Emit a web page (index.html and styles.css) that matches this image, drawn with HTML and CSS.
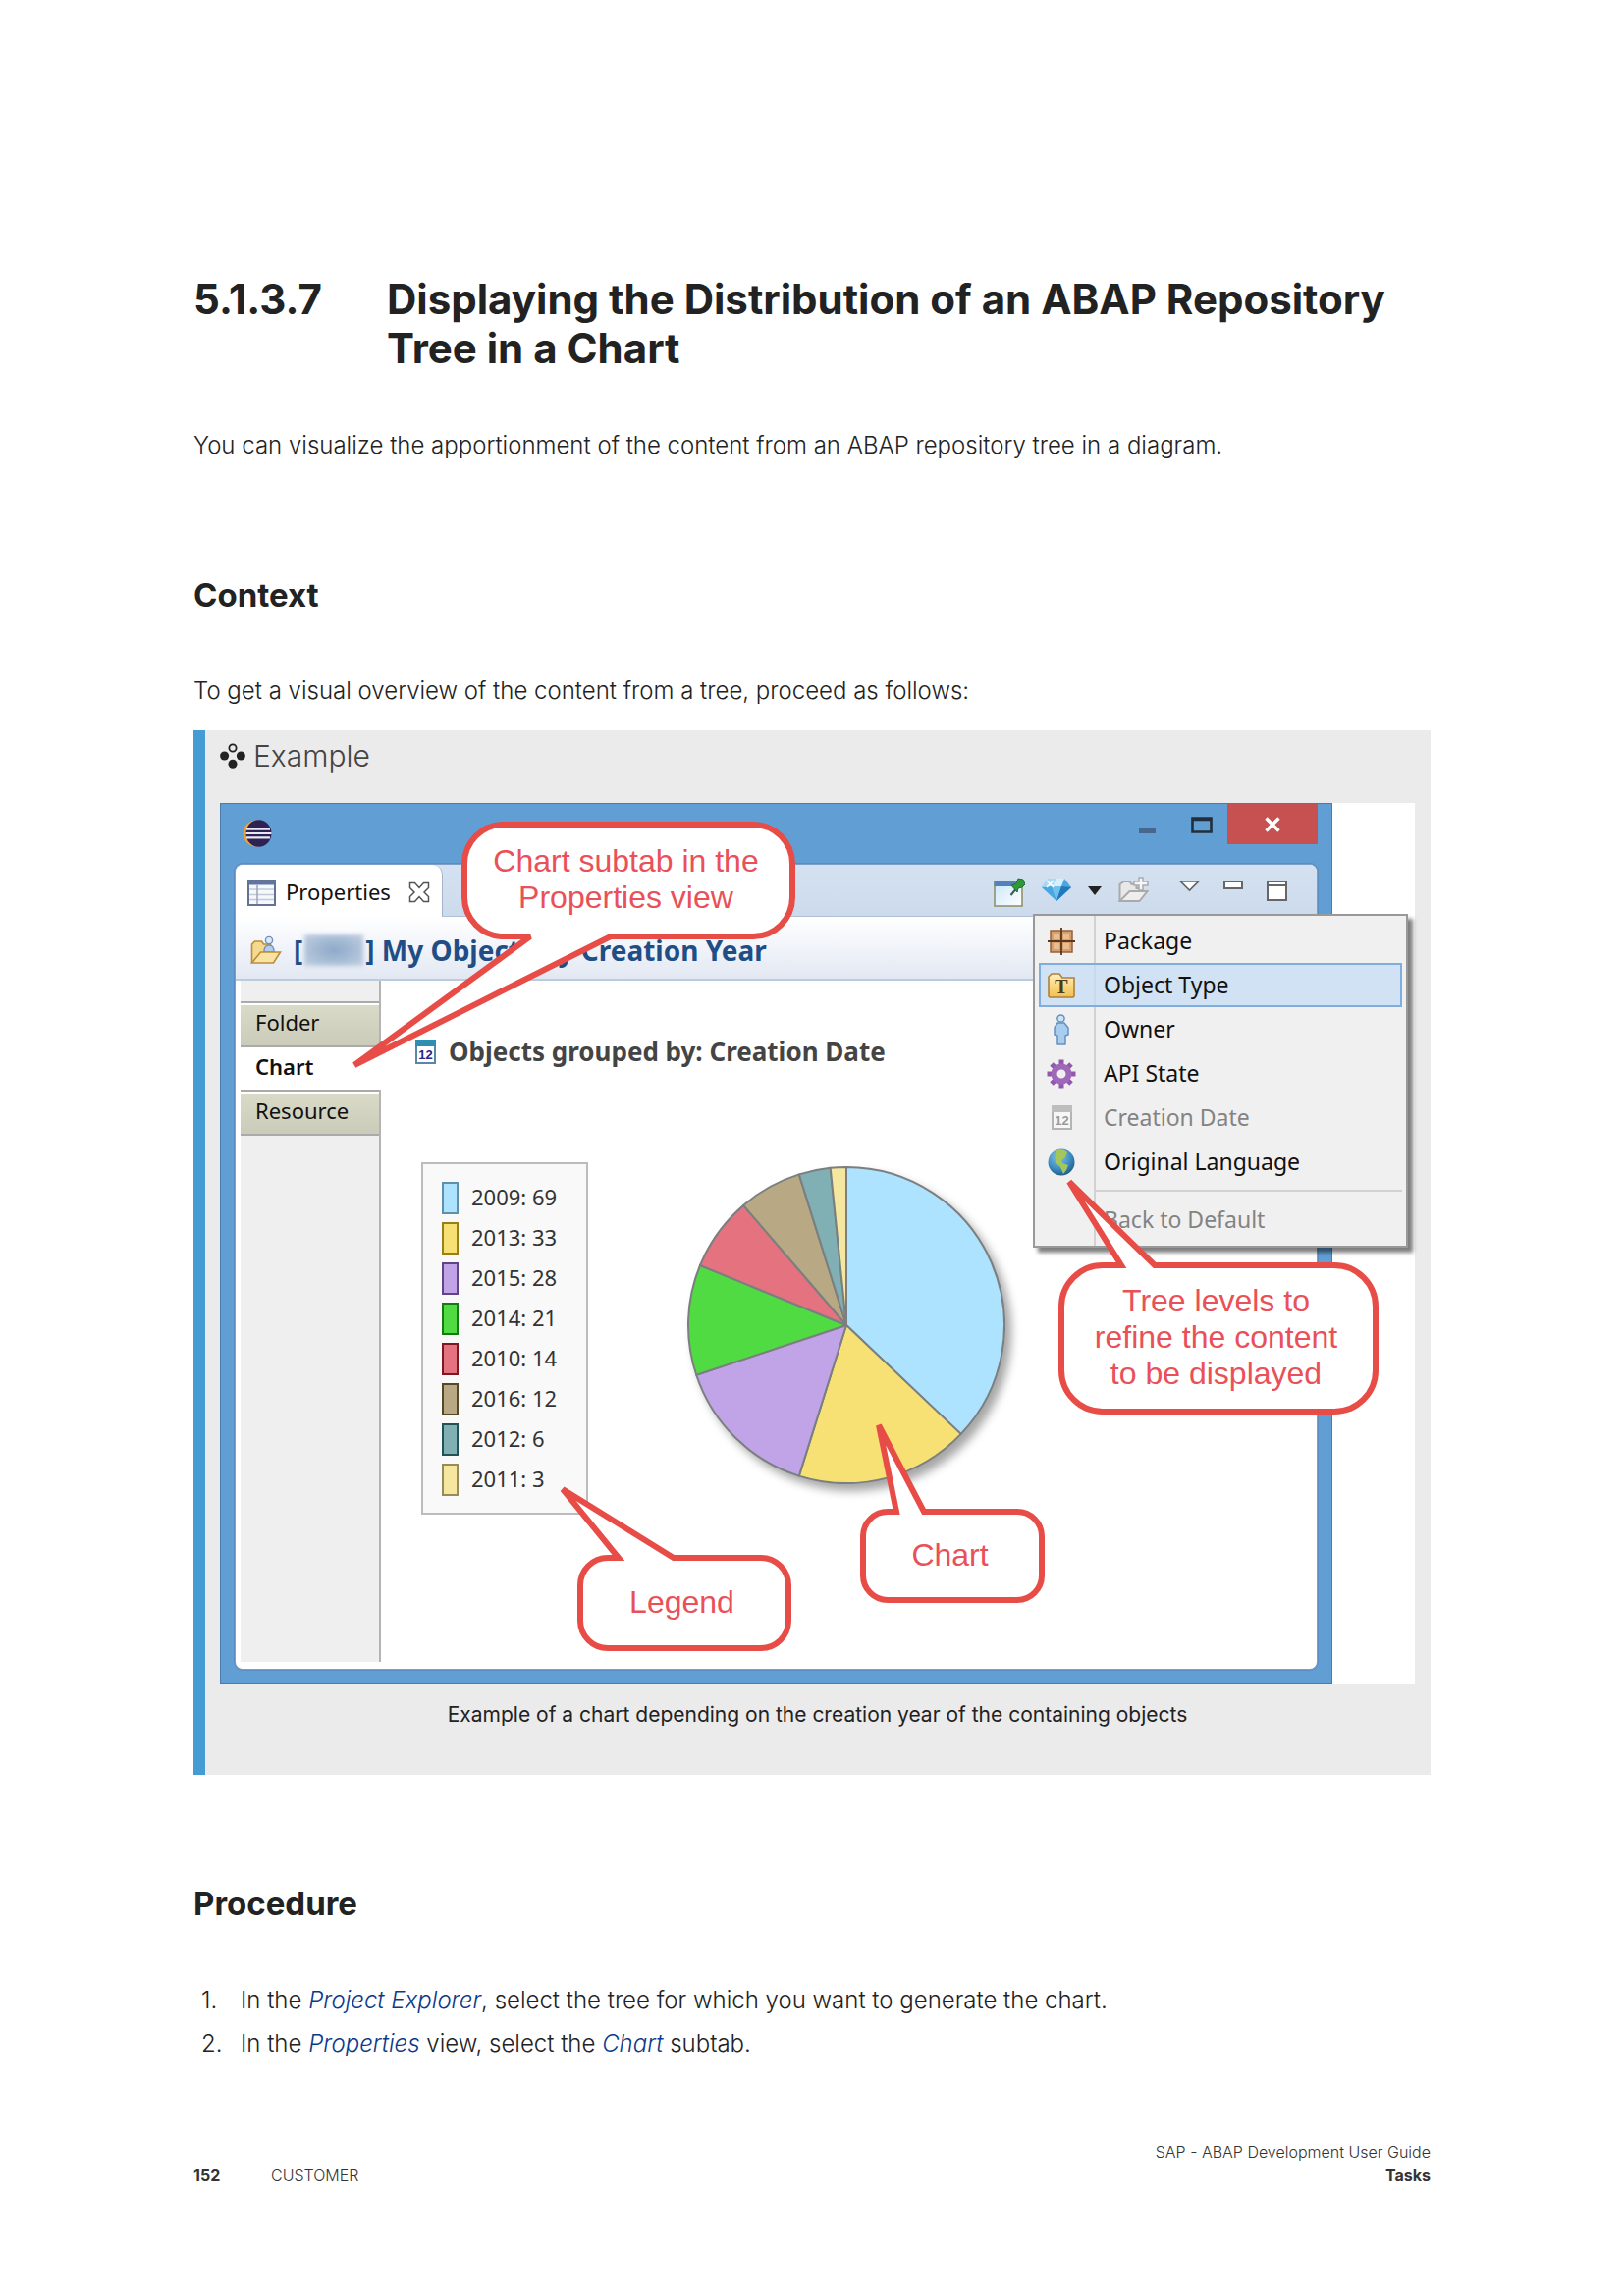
FILE: index.html
```html
<!DOCTYPE html>
<html lang="en">
<head>
<meta charset="utf-8">
<title>Displaying the Distribution of an ABAP Repository Tree in a Chart</title>
<link rel="stylesheet" href="styles.css">
</head>
<body>
<div class="page">
  <main>
    <h1><span>5.1.3.7</span><span>Displaying the Distribution of an ABAP Repository Tree in a Chart</span></h1>
    <p class="intro">You can visualize the apportionment of the content from an ABAP repository tree in a diagram.</p>

    <h2>Context</h2>
    <p>To get a visual overview of the content from a tree, proceed as follows:</p>

    <section class="example">
      <h3>
        <svg width="26" height="26" viewBox="0 0 26 26" aria-hidden="true"><circle cx="13" cy="5" r="3.6" fill="none" stroke="#222" stroke-width="1.8"/><circle cx="4.6" cy="13" r="4.5" fill="#222"/><circle cx="21.4" cy="13" r="4.5" fill="#222"/><circle cx="13" cy="21.2" r="4.5" fill="#222"/></svg>
        Example
      </h3>
      <figure>
        <div class="shot">
          <div class="window">
            <header class="titlebar">
              <svg class="app-icon" width="30" height="28" viewBox="0 0 30 28" aria-hidden="true"><ellipse cx="14" cy="14" rx="13.5" ry="13.5" fill="#e8a33a"/><ellipse cx="16.500" cy="14" rx="13" ry="13.8" fill="#2c2255"/><path d="M4 9.700h24M3.500 14h26M4 18.300h24" stroke="#e9e7f2" stroke-width="2.2"/></svg>
              <div class="window-buttons">
                <button class="min" aria-label="Minimize window"><svg width="17" height="5"><rect width="17" height="5" fill="#46688c"/></svg></button>
                <button class="max" aria-label="Maximize window"><svg width="22" height="17"><path d="M1.5 1.5h19v14h-19zM1 3h20" fill="none" stroke="#222e3b" stroke-width="2.6"/></svg></button>
                <button class="close" aria-label="Close window"><svg width="18" height="16" viewBox="0 0 18 16"><path d="M2.500 1.500l13 13M15.500 1.500l-13 13" stroke="#fff" stroke-width="3.400"/></svg></button>
              </div>
            </header>
            <div class="client">
              <div class="tab-row">
                <div class="tab">
                  <svg width="29" height="27" viewBox="0 0 29 27" aria-hidden="true"><rect x="1" y="1" width="27" height="25" fill="#f6f9fc" stroke="#667291" stroke-width="2"/><rect x="1" y="1" width="27" height="4.500" fill="#5d76a6"/><path d="M2 10h25M2 15.500h25M2 20.500h25" stroke="#c2cad8" stroke-width="1.500"/><path d="M10 6v19" stroke="#9aa4b8" stroke-width="1.500"/></svg>
                  <span>Properties</span>
                  <button aria-label="Close tab"><svg width="22" height="22" viewBox="0 0 22 22"><path d="M1.500 1.500h5L11 6.500l4.500-5h5v5L16 11l4.500 4.500v5h-5L11 15.500l-4.500 5h-5v-5L6 11 1.500 6.500z" fill="#fff" stroke="#555" stroke-width="1.500"/></svg></button>
                </div>
                <div class="toolbar">
                  <div class="tools view-tools">
                    <button aria-label="Pin view"><svg width="32" height="32" viewBox="0 0 32 32"><defs><linearGradient id="pinbg" x2="1" y2="1"><stop offset="0" stop-color="#c9e6fa"/><stop offset="1" stop-color="#fff"/></linearGradient></defs><rect x="1" y="6" width="28" height="24" fill="url(#pinbg)" stroke="#8c8c62" stroke-width="1.500"/><path d="M.500 5h22v5h-22z" fill="#5480bd"/><path d="M17.500 19l5-6" stroke="#3c5a50" stroke-width="2"/><path d="M18 9l5-2 2-5 5 1 2 5-3 3-4 1-1 4z" fill="#2f9a3b" stroke="#1e6e2b"/></svg></button>
                    <button aria-label="Group by"><svg width="30" height="32" viewBox="0 0 30 32"><path d="M7 2h16l7 9-15 14L0 11z" fill="#4ba5df"/><path d="M7 2h8l-5 8-10 1z" fill="#a9dbf6"/><path d="M15 2h8l-3 8H10z" fill="#d6effc"/><path d="M10 10h10l-5 15z" fill="#71c1ef"/><path d="M20 10l10 1-15 14z" fill="#2378bd"/><path d="M5 4l7 7M12 4l-7 7" stroke="#fff" stroke-width="1.500"/></svg></button>
                    <button aria-label="Group by options"><svg width="14" height="32" viewBox="0 0 14 32"><path d="M0 10h14l-7 9z" fill="#222"/></svg></button>
                    <button aria-label="Add to folder" disabled><svg width="31" height="32" viewBox="0 0 31 32"><path d="M1.500 25V8l4-3h6l2 3 5-1v5h4v4" fill="#e8e8e8" stroke="#aaa" stroke-width="2"/><path d="M1.500 25l10-10h18l-8 10z" fill="#eee" stroke="#aaa" stroke-width="2"/><path d="M21 1h4v4h5v4h-5v5h-4V9h-5V5h5z" fill="#f6f6f6" stroke="#aaa" stroke-width="1.500"/></svg></button>
                  </div>
                  <div class="tools part-tools">
                    <button aria-label="View menu"><svg width="21" height="32" viewBox="0 0 21 32"><path d="M1.500 5h18l-9 9z" fill="#fff" stroke="#666" stroke-width="1.600"/></svg></button>
                    <button aria-label="Minimize"><svg width="20" height="32" viewBox="0 0 20 32"><rect x="1" y="5" width="18" height="7" fill="#fff" stroke="#666" stroke-width="2"/></svg></button>
                    <button aria-label="Maximize"><svg width="21" height="32" viewBox="0 0 21 32"><path d="M1 5h19v19H1zM1 9h19" fill="#fff" stroke="#666" stroke-width="2"/></svg></button>
                  </div>
                </div>
              </div>
              <div class="view-header">
                <svg width="32" height="30" viewBox="0 0 32 30" aria-hidden="true"><path d="M1.500 28V9l3-3h7l2 3h7v9" fill="#f5d98c" stroke="#b98d3c" stroke-width="1.600"/><path d="M14 17c0-6 2-7 5-7s5 1 5 7z" fill="#b3cdea" stroke="#6f90bf" stroke-width="1.400"/><circle cx="19" cy="5" r="3.600" fill="#dbe9f8" stroke="#6f90bf" stroke-width="1.400"/><path d="M1.500 28l9-11h20l-7 11z" fill="#fae3a0" stroke="#b98d3c" stroke-width="1.600"/></svg>
                <span class="view-title">[<span class="redacted"></span>] My Objects by Creation Year</span>
              </div>
              <div class="view-body">
                <nav class="subtabs">
                  <button>Folder</button>
                  <button class="active">Chart</button>
                  <button>Resource</button>
                </nav>
                <div class="content">
                  <div class="group-title">
                    <svg width="21" height="25" viewBox="0 0 21 25" aria-hidden="true"><rect x="1" y="1" width="19" height="23" fill="#fff" stroke="#5a87a8" stroke-width="2"/><rect width="21" height="7" fill="#2f8fb3"/><text x="10.500" y="20" text-anchor="middle" class="cal-text cal-blue">12</text></svg>
                    Objects grouped by: Creation Date
                  </div>
                  <div class="chart-row">
                    <ul class="legend">
                      <li><i class="y2009"></i><span>2009: 69</span></li>
                      <li><i class="y2013"></i><span>2013: 33</span></li>
                      <li><i class="y2015"></i><span>2015: 28</span></li>
                      <li><i class="y2014"></i><span>2014: 21</span></li>
                      <li><i class="y2010"></i><span>2010: 14</span></li>
                      <li><i class="y2016"></i><span>2016: 12</span></li>
                      <li><i class="y2012"></i><span>2012: 6</span></li>
                      <li><i class="y2011"></i><span>2011: 3</span></li>
                    </ul>
                    <svg class="pie" width="336" height="336" viewBox="-168 -166 336 336" role="img" aria-label="Objects by creation year">
                      <g stroke="#7c7f80" stroke-width="2" stroke-linejoin="round">
                        <path fill="#ade3ff" d="M0 0V-161A161 161 0 0 1 116.700 110.900z"/>
                        <path fill="#f7e175" d="M0 0L116.700 110.900A161 161 0 0 1-48.200 153.600z"/>
                        <path fill="#c1a3e8" d="M0 0L-48.200 153.600A161 161 0 0 1-152.800 50.800z"/>
                        <path fill="#51db43" d="M0 0L-152.800 50.800A161 161 0 0 1-149-61z"/>
                        <path fill="#e4727f" d="M0 0L-149-61A161 161 0 0 1-104.900-122.100z"/>
                        <path fill="#b8a883" d="M0 0L-104.900-122.100A161 161 0 0 1-48.200-153.600z"/>
                        <path fill="#80b0b3" d="M0 0L-48.200-153.600A161 161 0 0 1-16.300-160.200z"/>
                        <path fill="#f6e7a0" d="M0 0L-16.300-160.200A161 161 0 0 1 0-161z"/>
                      </g>
                    </svg>
                  </div>
                </div>
              </div>
            </div>
          </div>

          <div class="menu" role="menu">
            <button role="menuitem"><svg width="28" height="28" viewBox="0 0 28 28"><rect x="3" y="3" width="22" height="22" fill="#d79f6b" stroke="#93613c" stroke-width="1.500"/><path d="M6 6h6v6H6zM16 6h6v6h-6zM6 16h6v6H6zM16 16h6v6h-6z" fill="#e9bd8d"/><path d="M14 0v28M0 14h28" stroke="#5b3620" stroke-width="1.800"/></svg><span>Package</span></button>
            <button role="menuitem" class="selected"><svg width="28" height="28" viewBox="0 0 28 28"><defs><linearGradient id="fold" x2="0" y2="1"><stop offset="0" stop-color="#fff0b8"/><stop offset="1" stop-color="#f3c04e"/></linearGradient></defs><path d="M1 25V5l3-3h8l3 4h12v19l-1 1H2z" fill="url(#fold)" stroke="#b0803a" stroke-width="1.600"/><text x="14" y="22" text-anchor="middle" class="type-text">T</text></svg><span>Object Type</span></button>
            <button role="menuitem"><svg width="28" height="32" viewBox="0 0 28 32"><path d="M10 9h7l4 5v7l-3 1v9h-8v-9l-3-1v-7z" fill="#a9cdee" stroke="#6490bd" stroke-width="1.500" stroke-linejoin="round"/><circle cx="13.500" cy="4.500" r="3.600" fill="#cfe4f7" stroke="#6490bd" stroke-width="1.500"/></svg><span>Owner</span></button>
            <button role="menuitem"><svg width="30" height="30" viewBox="-15 -15 30 30"><g stroke="#9358ad" stroke-width="5"><path d="M0-14.500V14.500M-14.500 0H14.500M-10-10L10 10M-10 10L10-10"/></g><circle r="7.500" fill="#f0f0f0" stroke="#a068b8" stroke-width="6"/></svg><span>API State</span></button>
            <button role="menuitem" disabled><svg width="21" height="25" viewBox="0 0 21 25"><rect x="1" y="1" width="19" height="23" fill="#f6f6f6" stroke="#b4b4b4" stroke-width="2"/><rect width="21" height="7" fill="#bdbdbd"/><text x="10.500" y="20" text-anchor="middle" class="cal-text cal-grey">12</text></svg><span>Creation Date</span></button>
            <button role="menuitem"><svg width="28" height="28" viewBox="0 0 28 28"><defs><radialGradient id="sea" cx=".4" cy=".3" r=".75"><stop offset="0" stop-color="#8cc8ea"/><stop offset=".6" stop-color="#3c8dc0"/><stop offset="1" stop-color="#1d5685"/></radialGradient></defs><circle cx="14" cy="14" r="13.500" fill="url(#sea)"/><path d="M8 3c4-3 9-2 12 1l-2 5-4 3 1 3 6 2-2 5-3 4-3-7-5-5z" fill="#a4c75c"/></svg><span>Original Language</span></button>
            <hr>
            <button role="menuitem" disabled><b></b><span>Back to Default</span></button>
          </div>

          <div class="callout callout-subtab"><svg aria-hidden="true"><path d="M70 117H43A40 40 0 0 1 3 77V43A40 40 0 0 1 43 3H297A40 40 0 0 1 337 43V77A40 40 0 0 1 297 117H152L-109 248Z"/></svg><span>Chart subtab in the<br>Properties view</span></div>
          <div class="callout callout-levels"><svg aria-hidden="true"><path d="M64 3H45A42 42 0 0 0 3 45V110A42 42 0 0 0 45 152H281A42 42 0 0 0 323 110V45A42 42 0 0 0 281 3H98L11-82Z"/></svg><span>Tree levels to<br>refine the content<br>to be displayed</span></div>
          <div class="callout callout-chart"><svg aria-hidden="true"><path d="M37 3H28A25 25 0 0 0 3 28V68A25 25 0 0 0 28 93H160A25 25 0 0 0 185 68V28A25 25 0 0 0 160 3H65L19-85Z"/></svg><span>Chart</span></div>
          <div class="callout callout-legend"><svg aria-hidden="true"><path d="M42 3H31A28 28 0 0 0 3 31V67A28 28 0 0 0 31 95H187A28 28 0 0 0 215 67V31A28 28 0 0 0 187 3H98L-15-67Z"/></svg><span>Legend</span></div>
        </div>
        <figcaption>Example of a chart depending on the creation year of the containing objects</figcaption>
      </figure>
    </section>

    <h2 class="procedure">Procedure</h2>
    <ol>
      <li><span>In the <em>Project Explorer</em>, select the tree for which you want to generate the chart.</span></li>
      <li><span>In the <em>Properties</em> view, select the <em>Chart</em> subtab.</span></li>
    </ol>
  </main>

  <footer>
    <div class="folio"><strong>152</strong><span>CUSTOMER</span></div>
    <div class="doc-title">SAP - ABAP Development User Guide<br><strong>Tasks</strong></div>
  </footer>
</div>
</body>
</html>
```
FILE: styles.css
```css
* { box-sizing: border-box; }

body {
  margin: 0;
  background: #fff;
  color: #222;
  font-family: Inter, "Liberation Sans", sans-serif;
  font-size: 24px;
  font-weight: 350;
  line-height: 36px;
}

h1, h2, h3, p, figure, ol, ul { margin: 0; padding: 0; }
ul { list-style: none; }
svg { display: block; flex: none; }

button {
  margin: 0;
  padding: 0;
  border: 0;
  background: none;
  color: inherit;
  font: inherit;
  text-align: left;
}

.page { padding: 280px 197px 100px; }

h1 {
  display: grid;
  grid-template-columns: 197px 1fr;
  font-size: 42px;
  font-weight: 700;
  line-height: 50px;
}

.intro { margin-top: 56px; }

h2 {
  margin: 114px 0 60px;
  font-size: 33px;
  font-weight: 700;
  line-height: 40px;
}

h2.procedure { margin: 111px 0 57px; }

/* Example box */
.example {
  margin-top: 22px;
  padding: 8px 16px 46px 15px;
  border-left: 12px solid #459bd4;
  background: #ebebeb;
}

h3 {
  display: flex;
  align-items: center;
  gap: 8px;
  margin-bottom: 30px;
  color: #444;
  font-size: 30px;
  font-weight: 300;
  line-height: 36px;
}

figcaption {
  margin-top: 16px;
  font-size: 21px;
  font-weight: 400;
  line-height: 30px;
  text-align: center;
}

.shot {
  position: relative;
  background: #fff;
  color: #111;
  font-family: "Noto Sans", "Open Sans", sans-serif;
  font-size: 22px;
  font-weight: 400;
  line-height: 30px;
}

/* Application window */
.window {
  margin-right: 84px;
  padding: 0 14px 14px;
  border: 1px solid #4a7bab;
  background: #619ed4;
}

.titlebar {
  display: flex;
  justify-content: space-between;
  height: 61px;
}

.app-icon { margin: 16px 0 0 8px; }

.window-buttons { display: flex; height: 41px; }
.window-buttons button { display: grid; justify-items: center; }
.window-buttons .min { width: 59px; padding-top: 25px; align-items: start; }
.window-buttons .max { width: 52px; padding-top: 13px; align-items: start; }
.window-buttons .close { width: 92px; align-items: center; background: #c75050; }

.client {
  overflow: hidden;
  border: 1px solid #7d9fc9;
  border-radius: 8px;
  background: #fff;
  outline: 1px solid #5a8cc0;
}

.tab-row {
  display: flex;
  justify-content: space-between;
  height: 53px;
  background: linear-gradient(#d4e1f1, #ccdbec);
  box-shadow: inset 0 -1px #afbfd6;
}

.tab {
  display: flex;
  align-items: center;
  width: 211px;
  padding: 3px 12px 0;
  border-right: 1px solid #a5b4cc;
  border-radius: 8px 10px 0 0;
  background: #fff;
}

.tab span { flex: 1; margin-left: 10px; padding-bottom: 2px; }

.toolbar { display: flex; gap: 31px; padding: 12px 30px 0 0; }
.tools { display: flex; }
.tools button { display: block; height: 32px; }
.view-tools { gap: 17px; }
.part-tools { gap: 24px; }

.view-header {
  display: flex;
  align-items: center;
  gap: 12px;
  height: 65px;
  padding: 4px 0 0 15px;
  border-bottom: 2px solid #b9cbde;
  background: linear-gradient(#fff, #e2e8f3);
}

.view-title {
  display: flex;
  align-items: center;
  color: #1f4e86;
  font-size: 28px;
  font-weight: 700;
  line-height: 40px;
  white-space: pre;
}

.redacted {
  width: 60px;
  height: 32px;
  margin: 0 2px;
  background: radial-gradient(#8ca9c9, #c3d0e1);
  filter: blur(2px);
}

.view-body { display: flex; }

.subtabs {
  display: flex;
  flex-direction: column;
  width: 143px;
  margin: 0 0 7px 5px;
  padding-top: 21px;
  border-right: 2px solid #b4b4b4;
  background: #efefef;
}

.subtabs button {
  height: 45px;
  padding: 0 0 5px 15px;
  border-top: 2px solid #aaa;
  background: linear-gradient(#fff 2px, #d9dac8 2px, #cacbb9);
}

.subtabs button.active {
  margin-right: -2px;
  background: #fff;
  font-weight: 600;
}

.subtabs button:last-child { height: 47px; border-bottom: 2px solid #aaa; }

.content { flex: 1; padding: 52px 0 157px 35px; }

.group-title {
  display: flex;
  align-items: center;
  gap: 13px;
  color: #444;
  font-size: 26px;
  font-weight: 700;
  line-height: 40px;
}

.cal-text { font: 700 13px "Liberation Sans", sans-serif; }
.cal-blue { fill: #26268c; }
.cal-grey { fill: #9a9a9a; }
.type-text { font: 700 20px "Liberation Serif", serif; fill: #4f3c20; }

.chart-row { display: flex; gap: 95px; padding: 93px 0 0 6px; }

.legend {
  width: 170px;
  height: 359px;
  padding: 14px 0 0 19px;
  border: 2px solid #bcbcbc;
  background: #f9f9f9;
  color: #333;
}

.legend li { display: flex; align-items: center; gap: 13px; height: 41px; }
.legend i { width: 17px; height: 33px; border-width: 2px; border-style: solid; }
.legend span { padding-bottom: 3px; }

.y2009 { background: #ade3ff; border-color: #5f90ab; }
.y2013 { background: #f7e175; border-color: #988018; }
.y2015 { background: #c1a3e8; border-color: #5f4585; }
.y2014 { background: #51db43; border-color: #177a10; }
.y2010 { background: #e4727f; border-color: #7c1824; }
.y2016 { background: #b8a883; border-color: #564826; }
.y2012 { background: #80b0b3; border-color: #215256; }
.y2011 { background: #f6e7a0; border-color: #978c57; }

.pie { filter: drop-shadow(6px 7px 5px rgba(0, 0, 0, .35)); }

/* Drop-down menu over the window */
.menu {
  position: absolute;
  top: 113px;
  right: 7px;
  width: 382px;
  padding: 3px 4px 4px;
  border: 2px solid #999;
  background: linear-gradient(90deg, transparent 60px, #d2d2d2 60px, #d2d2d2 62px, transparent 62px) #f0f0f0;
  box-shadow: 5px 5px 4px rgba(0, 0, 0, .5);
  font-size: 23px;
}

.menu button {
  display: grid;
  grid-template-columns: 46px 1fr;
  align-items: center;
  justify-items: center;
  gap: 20px;
  width: 100%;
  height: 45px;
}

.menu button span { justify-self: start; padding-bottom: 2px; }
.menu button:disabled { color: #838383; }

.menu .selected {
  background: rgba(195, 220, 245, .7);
  box-shadow: inset 0 0 0 2px #7fadde;
}

.menu hr {
  height: 2px;
  margin: 6px 0 6px 57px;
  border: 0;
  background: #d2d2d2;
}

/* Annotations */
.callout {
  position: absolute;
  display: grid;
  place-items: center;
  padding: 0 5px 2px 0;
  color: #ea5058;
  font-family: "Liberation Sans", sans-serif;
  font-size: 32px;
  line-height: 37px;
  text-align: center;
}

.callout svg {
  position: absolute;
  inset: 0;
  width: 100%;
  height: 100%;
  overflow: visible;
}

.callout path { fill: #fff; stroke: #e74c46; stroke-width: 6; stroke-miterlimit: 3; }
.callout span { position: relative; }

.callout-subtab { left: 246px; top: 19px; width: 340px; height: 120px; }
.callout-levels { right: 37px; top: 468px; width: 326px; height: 155px; }
.callout-chart { left: 652px; top: 719px; width: 188px; height: 96px; }
.callout-legend { left: 364px; top: 766px; width: 218px; height: 98px; }

/* Procedure steps */
ol { list-style: none; counter-reset: step; line-height: 44px; }

ol li {
  display: grid;
  grid-template-columns: 40px 1fr;
  padding-left: 8px;
  counter-increment: step;
}

ol li::before { content: counter(step) "."; }
em { color: #0b3a8c; }

footer {
  display: flex;
  justify-content: space-between;
  align-items: flex-end;
  margin-top: 76px;
  color: #333;
  font-size: 16px;
  line-height: 24px;
}

strong { font-weight: 700; }
.folio { display: flex; }
.folio strong { width: 79px; }
.doc-title { text-align: right; }
```
